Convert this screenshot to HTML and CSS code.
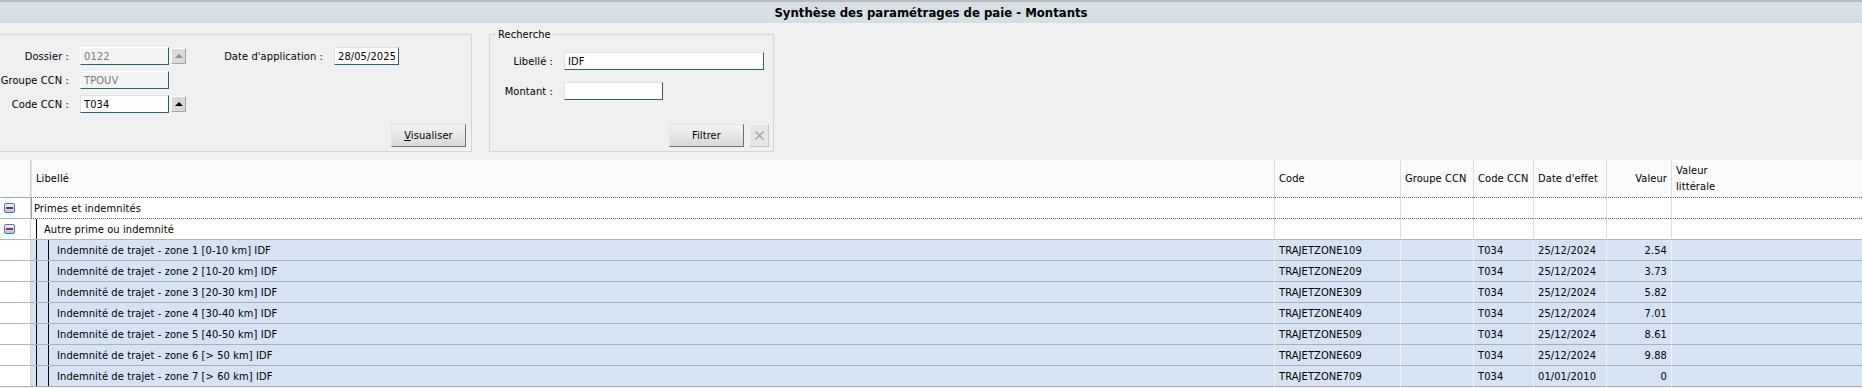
FILE: index.html
```html
<!DOCTYPE html>
<html lang="fr">
<head>
    <meta charset="UTF-8">
    <title>Synthèse des paramétrages de paie - Montants</title>
    <link rel="stylesheet" href="styles.css">
</head>
<body>
    <div class="title-bar">Synthèse des paramétrages de paie - Montants</div>

    <div class="criteria">
        <!-- Dossier / CCN -->
        <div class="panel">
            <div class="form-grid">
                <label class="lbl">Dossier :</label>
                <input class="field" type="text" value="0122" disabled>
                <button class="lookup" disabled><span class="arrow"></span></button>
                <label class="lbl">Date d'application :</label>
                <input class="field date" type="text" value="28/05/2025">

                <label class="lbl">Groupe CCN :</label>
                <input class="field" type="text" value="TPOUV" disabled>
                <span></span><span></span><span></span>

                <label class="lbl">Code CCN :</label>
                <input class="field" type="text" value="T034">
                <button class="lookup"><span class="arrow"></span></button>
            </div>
            <div class="actions">
                <button class="btn"><u>V</u>isualiser</button>
            </div>
        </div>

        <!-- Recherche -->
        <fieldset class="search">
            <legend>Recherche</legend>
            <div class="search-grid">
                <label class="lbl">Libellé :</label>
                <input class="field wide" type="text" value="IDF">
                <label class="lbl">Montant :</label>
                <input class="field amount" type="text" value="">
            </div>
            <div class="actions">
                <button class="btn">Filtrer</button>
                <button class="btn clear">
                    <svg width="9" height="9" viewBox="0 0 9 9"><path d="M0.5 0.5L8.5 8.5M8.5 0.5L0.5 8.5" stroke="#9a9a9a" stroke-width="1.1" fill="none"/></svg>
                </button>
            </div>
        </fieldset>
    </div>

    <table class="grid">
        <colgroup>
            <col style="width:31px">
            <col style="width:1243px">
            <col style="width:126px">
            <col style="width:73px">
            <col style="width:60px">
            <col style="width:73px">
            <col style="width:65px">
            <col style="width:191px">
        </colgroup>
        <thead>
            <tr>
                <th class="toggle-col"></th>
                <th>Libellé</th>
                <th>Code</th>
                <th>Groupe CCN</th>
                <th>Code CCN</th>
                <th>Date d'effet</th>
                <th class="num">Valeur</th>
                <th>Valeur<br>littérale</th>
            </tr>
        </thead>
        <tbody>
            <tr class="group focus">
                <td class="toggle-col"><span class="toggle"></span></td>
                <td class="tree"><div class="label lvl0">Primes et indemnités</div></td>
                <td></td><td></td><td></td><td></td><td></td><td></td>
            </tr>
            <tr class="group">
                <td class="toggle-col"><span class="toggle"></span></td>
                <td class="tree"><div class="label"><span class="guide g1"></span><span class="text t1">Autre prime ou indemnité</span></div></td>
                <td></td><td></td><td></td><td></td><td></td><td></td>
            </tr>
            <tr class="item">
                <td class="toggle-col"></td>
                <td class="tree"><div class="label"><span class="guide g1"></span><span class="guide g2"></span><span class="text t2">Indemnité de trajet - zone 1 [0-10 km] IDF</span></div></td>
                <td>TRAJETZONE109</td><td></td><td>T034</td><td>25/12/2024</td><td class="num">2.54</td><td></td>
            </tr>
            <tr class="item">
                <td class="toggle-col"></td>
                <td class="tree"><div class="label"><span class="guide g1"></span><span class="guide g2"></span><span class="text t2">Indemnité de trajet - zone 2 [10-20 km] IDF</span></div></td>
                <td>TRAJETZONE209</td><td></td><td>T034</td><td>25/12/2024</td><td class="num">3.73</td><td></td>
            </tr>
            <tr class="item">
                <td class="toggle-col"></td>
                <td class="tree"><div class="label"><span class="guide g1"></span><span class="guide g2"></span><span class="text t2">Indemnité de trajet - zone 3 [20-30 km] IDF</span></div></td>
                <td>TRAJETZONE309</td><td></td><td>T034</td><td>25/12/2024</td><td class="num">5.82</td><td></td>
            </tr>
            <tr class="item">
                <td class="toggle-col"></td>
                <td class="tree"><div class="label"><span class="guide g1"></span><span class="guide g2"></span><span class="text t2">Indemnité de trajet - zone 4 [30-40 km] IDF</span></div></td>
                <td>TRAJETZONE409</td><td></td><td>T034</td><td>25/12/2024</td><td class="num">7.01</td><td></td>
            </tr>
            <tr class="item">
                <td class="toggle-col"></td>
                <td class="tree"><div class="label"><span class="guide g1"></span><span class="guide g2"></span><span class="text t2">Indemnité de trajet - zone 5 [40-50 km] IDF</span></div></td>
                <td>TRAJETZONE509</td><td></td><td>T034</td><td>25/12/2024</td><td class="num">8.61</td><td></td>
            </tr>
            <tr class="item">
                <td class="toggle-col"></td>
                <td class="tree"><div class="label"><span class="guide g1"></span><span class="guide g2"></span><span class="text t2">Indemnité de trajet - zone 6 [&gt; 50 km] IDF</span></div></td>
                <td>TRAJETZONE609</td><td></td><td>T034</td><td>25/12/2024</td><td class="num">9.88</td><td></td>
            </tr>
            <tr class="item">
                <td class="toggle-col"></td>
                <td class="tree"><div class="label"><span class="guide g1"></span><span class="guide g2"></span><span class="text t2">Indemnité de trajet - zone 7 [&gt; 60 km] IDF</span></div></td>
                <td>TRAJETZONE709</td><td></td><td>T034</td><td>01/01/2010</td><td class="num">0</td><td></td>
            </tr>
        </tbody>
    </table>
</body>
</html>
```

FILE: styles.css
```css
body {
    margin: 0;
    background-color: #f0f0f0;
    font-family: "DejaVu Sans Condensed", "DejaVu Sans", sans-serif;
    font-stretch: condensed;
    font-size: 11px;
    letter-spacing: 0.1px;
    color: #000;
    overflow: hidden;
}
.title-bar {
    height: 21px;
    line-height: 21px;
    border-top: 2px solid #b7bcc1;
    background-color: #d5dfe4;
    text-align: center;
    font-weight: bold;
    font-size: 13px;
    letter-spacing: 0;
}
.criteria {
    display: flex;
    align-items: flex-start;
    padding-top: 11px;
}
.panel {
    box-sizing: border-box;
    width: 472px;
    height: 118px;
    border: 1px solid #d5d5d5;
    border-left: none;
    display: flex;
    flex-direction: column;
    padding: 12px 5px 4px 0;
}
.form-grid {
    display: grid;
    grid-template-columns: 69px 100px 17px 137px 76px;
    grid-auto-rows: 18px;
    row-gap: 6px;
    align-items: center;
}
.lbl {
    text-align: right;
    white-space: nowrap;
}
.field {
    box-sizing: border-box;
    height: 18px;
    margin: 0 0 0 11px;
    padding: 0 3px;
    border: 1px solid #e2e2e2;
    border-right-color: #2b5f78;
    border-bottom-color: #2b5f78;
    background-color: #fff;
    font: inherit;
    letter-spacing: inherit;
    color: #000;
    outline: none;
}
.form-grid .field {
    width: 89px;
}
.form-grid .field.date {
    width: 65px;
}
.field:disabled {
    background-color: #f3f3f3;
    border-top-color: #fff;
    border-left-color: #fff;
    color: #7a7a7a;
}
.lookup {
    box-sizing: border-box;
    width: 15px;
    height: 16px;
    margin-left: 2px;
    padding: 0;
    border: 1px solid #fff;
    border-right-color: #a5a5a5;
    border-bottom-color: #a5a5a5;
    background-color: #d9d9d9;
    display: flex;
    align-items: center;
    justify-content: center;
}
.arrow {
    width: 0;
    height: 0;
    border-left: 4px solid transparent;
    border-right: 4px solid transparent;
    border-bottom: 4px solid #000;
}
.lookup:disabled .arrow {
    border-bottom-color: #8e8e8e;
}
.actions {
    margin-top: auto;
    display: flex;
    justify-content: flex-end;
    gap: 5px;
}
.btn {
    box-sizing: border-box;
    height: 23px;
    width: 75px;
    padding: 0;
    border: 1px solid #e4e4e4;
    border-right-color: #6f6f6f;
    border-bottom-color: #6f6f6f;
    background: linear-gradient(#f3f3f3, #d9d9d9);
    font: inherit;
    letter-spacing: inherit;
    color: #000;
}
.btn.clear {
    width: 20px;
    background: #e6e6e6;
    border-color: #f4f4f4 #c4c4c4 #c4c4c4 #f4f4f4;
    display: flex;
    align-items: center;
    justify-content: center;
}
.search {
    box-sizing: border-box;
    width: 285px;
    height: 124px;
    margin: -6px 0 0 17px;
    padding: 0 4px 4px 0;
    border: 1px solid #d5d5d5;
    display: flex;
    flex-direction: column;
}
.search legend {
    margin-left: 6px;
    padding: 0 2px;
    line-height: 13px;
}
.search-grid {
    display: grid;
    grid-template-columns: 63px 1fr;
    grid-auto-rows: 18px;
    row-gap: 12px;
    align-items: center;
    margin-top: 11px;
}
.search .field.wide {
    width: 200px;
}
.search .field.amount {
    width: 99px;
}
.grid {
    margin-top: 8px;
    width: 1862px;
    table-layout: fixed;
    border-collapse: separate;
    border-spacing: 0;
}
.grid th,
.grid td {
    padding: 0 4px;
    white-space: nowrap;
    overflow: hidden;
    text-align: left;
    font-weight: normal;
    border-left: 1px solid #dedede;
}
.grid th:first-child,
.grid td:first-child {
    border-left: none;
}
.grid thead tr {
    height: 38px;
}
.grid th {
    background-color: #fbfbfb;
    border-bottom: 1px dotted #6e6e6e;
    line-height: 16px;
}
.grid th.toggle-col {
    border-bottom: 1px solid #a6a6a6;
}
.grid th.num,
.grid td.num {
    text-align: right;
}
.grid tbody tr {
    height: 21px;
}
.grid td {
    border-bottom: 1px solid #b4b4b4;
    background-color: #fff;
}
.grid tr.focus td {
    border-bottom: 1px dotted #6e6e6e;
}
.grid tr.focus td:first-child {
    border-bottom: 1px solid #b4b4b4;
}
.grid tr.item td {
    background-color: #d5e3f5;
    border-left-color: #edf2fa;
    border-bottom-color: #abb0b6;
}
.grid tr.item td:first-child {
    background-color: #fff;
    border-bottom-color: #b4b4b4;
}
.grid td.toggle-col,
.grid th.toggle-col {
    padding: 0;
    border-right: 1px solid #d2d2d2;
}
.toggle {
    display: block;
    box-sizing: border-box;
    width: 11px;
    height: 10px;
    margin-left: 4px;
    border: 1px solid #3a7cb0;
    border-radius: 2px;
    background: linear-gradient(#eef6fc, #9fcbeb);
    position: relative;
}
.toggle::after {
    content: "";
    position: absolute;
    left: 1px;
    right: 1px;
    top: 3px;
    height: 2px;
    background-color: #d4141b;
}
.grid td.tree {
    padding: 0;
    border-left: none;
}
.grid tr.focus td.tree {
    box-shadow: inset 1px 0 0 #9a9a9a;
}
.label {
    display: flex;
    height: 20px;
    align-items: center;
}
.label.lvl0 {
    padding-left: 3px;
}
.guide {
    align-self: stretch;
    flex: none;
    border-right: 1px solid #000;
}
.g1 {
    width: 5px;
}
.g2 {
    width: 11px;
}
.t1 {
    padding-left: 7px;
}
.t2 {
    padding-left: 8px;
}
```
